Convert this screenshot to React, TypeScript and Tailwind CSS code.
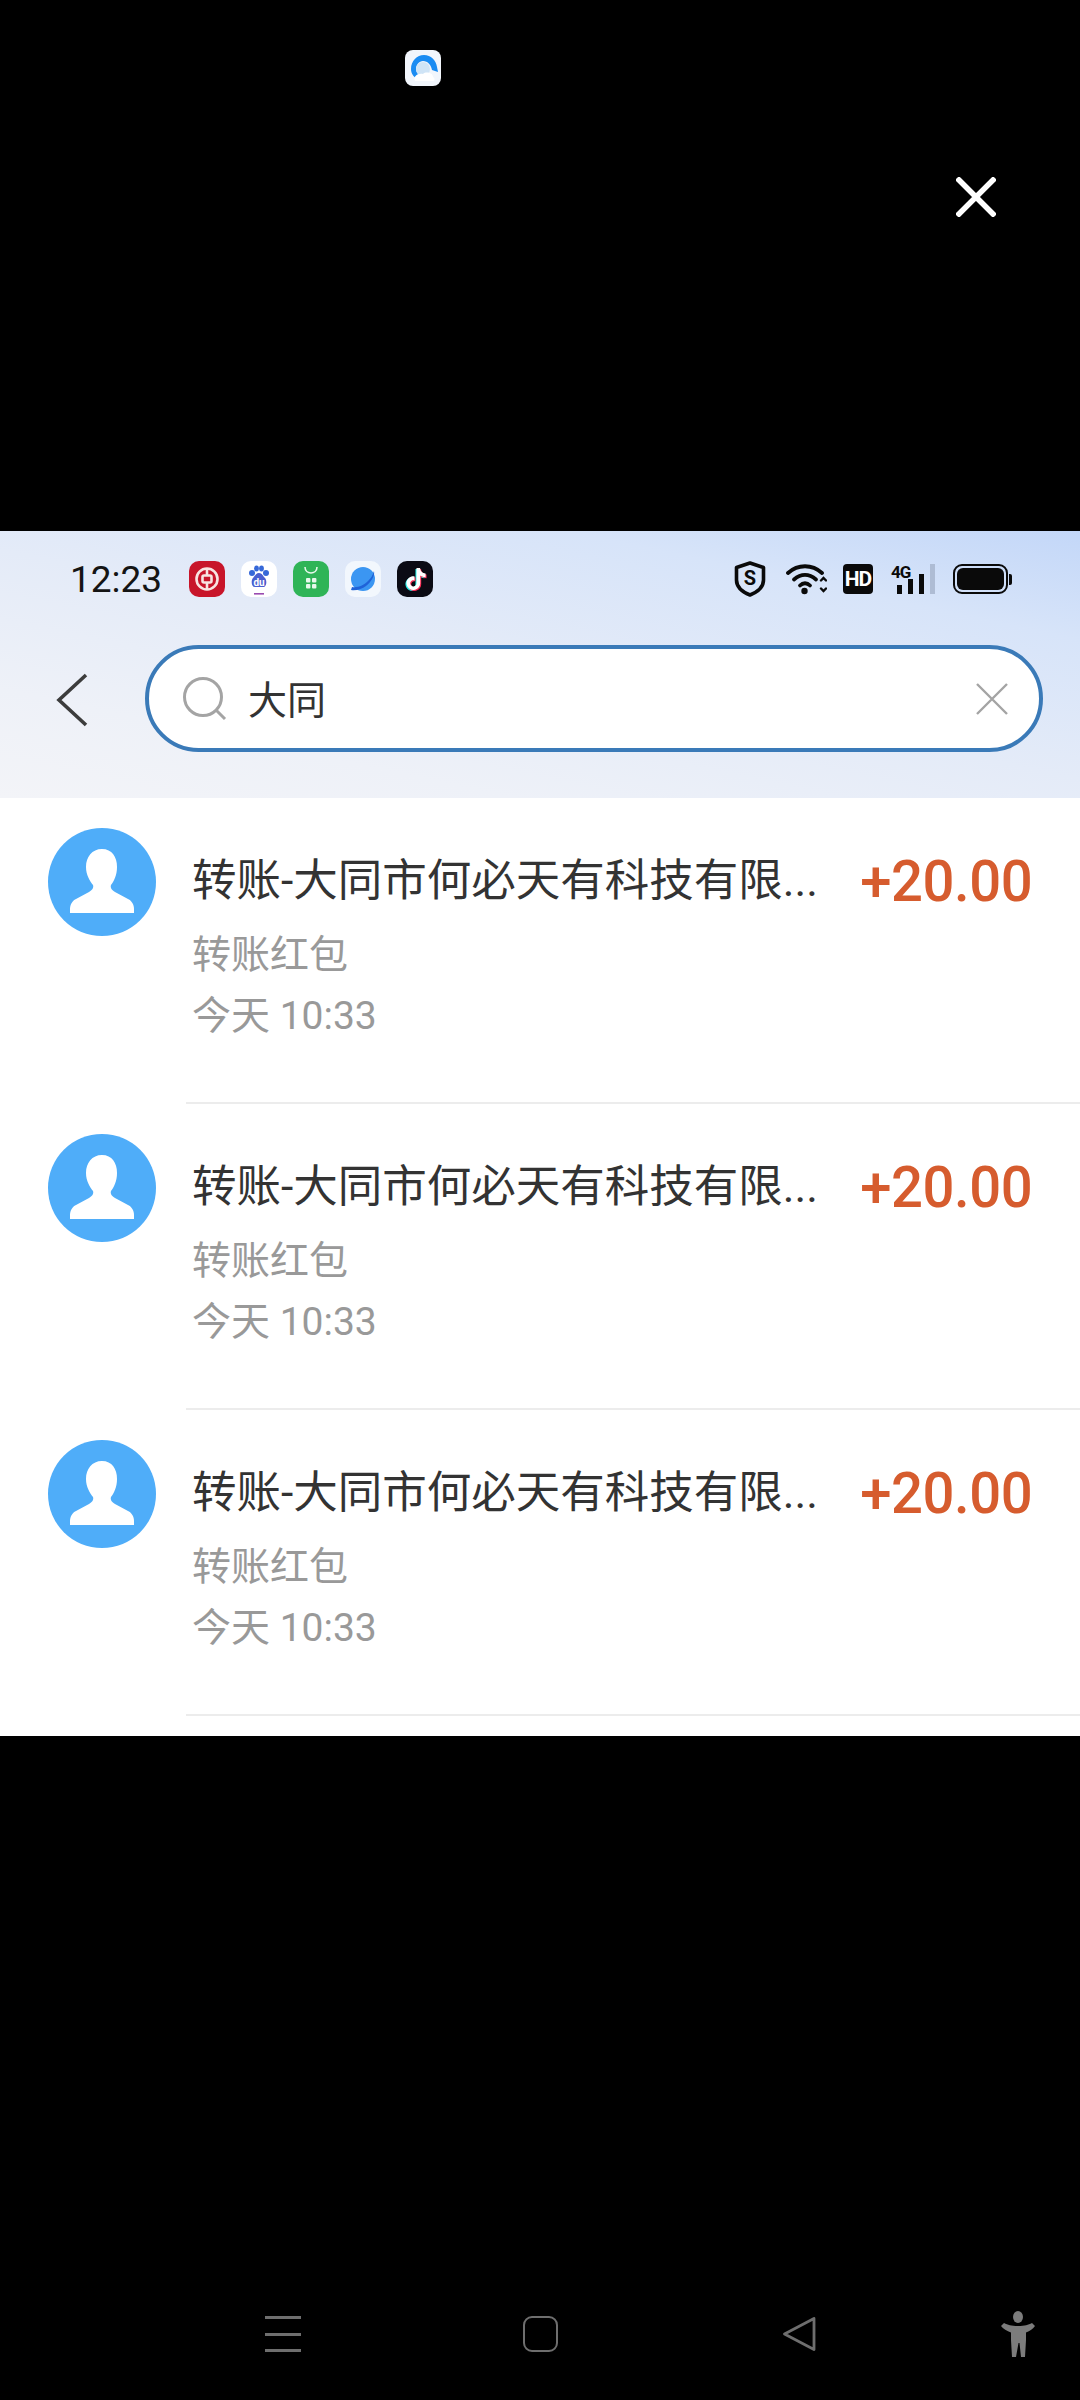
import React from "react";
import { SiTiktok } from "react-icons/si";

function AppIcons() {
  return (
    <div className="ml-[27px] flex gap-[16px]">
      <div className="flex h-[36px] w-[36px] items-center justify-center rounded-[10px] bg-[#c8152a]">
        <svg width="28" height="28" viewBox="0 0 28 28" fill="none" stroke="#f8e4e2" strokeWidth="2.6">
          <circle cx="14" cy="14" r="10.5" />
          <rect x="9.5" y="10.5" width="9" height="7" rx="1.5" />
          <path d="M14 3v7M14 18v7" />
        </svg>
      </div>
      <div className="flex h-[36px] w-[36px] items-center justify-center rounded-[10px] bg-white">
        <svg width="36" height="36" viewBox="0 0 36 36">
          <circle cx="11" cy="12" r="3" fill="#3668d8" />
          <circle cx="25" cy="12" r="3" fill="#3668d8" />
          <ellipse cx="15.5" cy="7.5" rx="2.4" ry="3" fill="#3668d8" />
          <ellipse cx="20.5" cy="7.5" rx="2.4" ry="3" fill="#3668d8" />
          <path d="M18 12c-3 0-4 3-6 5-2 2-2 9 2 9h8c4 0 4-7 2-9-2-2-3-5-6-5z" fill="#4a5fd0" />
          <text x="18" y="25" textAnchor="middle" fontSize="10" fontWeight="700" fill="#ffffff" fontFamily="Roboto, sans-serif">du</text>
          <rect x="13" y="32" width="10" height="1.6" fill="#9a4bb0" />
        </svg>
      </div>
      <div className="flex h-[36px] w-[36px] items-center justify-center rounded-[10px] bg-[#2fb457]">
        <svg width="36" height="36" viewBox="0 0 36 36" fill="#e8f8ec">
          <path d="M12 6c0 8 12 8 12 0" fill="none" stroke="#e8f8ec" strokeWidth="1.6" />
          <rect x="13" y="17" width="4.4" height="4.4" rx="1" />
          <rect x="19" y="17" width="4.4" height="4.4" rx="1" />
          <rect x="13" y="23" width="4.4" height="4.4" rx="1" />
          <rect x="19" y="23" width="4.4" height="4.4" rx="1" />
        </svg>
      </div>
      <div className="flex h-[36px] w-[36px] items-center justify-center rounded-[10px] bg-[#f2f7fd]">
        <svg width="36" height="36" viewBox="0 0 36 36">
          <circle cx="18" cy="18" r="12" fill="#3b96f2" />
          <path d="M29 10c1 5-3 11-8 15-4 3-10 5-15 4l1-3c6 1 12-2 16-6 3-3 5-6 6-10z" fill="#1f62d8" />
        </svg>
      </div>
      <div className="relative flex h-[36px] w-[36px] items-center justify-center rounded-[10px] bg-[#0b0b14]">
        <SiTiktok className="absolute left-[7px] top-[8px] h-[22px] w-[22px] text-[#25f4ee]" />
        <SiTiktok className="absolute left-[9px] top-[8px] h-[22px] w-[22px] text-[#fe2c55]" />
        <SiTiktok className="absolute left-[8px] top-[7px] h-[22px] w-[22px] text-[#ffffff]" />
      </div>
    </div>
  );
}

function StatusIcons() {
  return (
    <div className="mr-[68px] flex items-center">
      <svg width="32" height="36" viewBox="0 0 32 36" fill="none">
        <path d="M16 2 29.5 6.5V19c0 7-6 12-13.500 15C8.500 31 2.500 26 2.500 19V6.500z" stroke="#0a0a0a" strokeWidth="3.600" strokeLinejoin="round" />
        <text x="16" y="24" textAnchor="middle" fontSize="20" fontWeight="700" fill="#0a0a0a" fontFamily="Roboto, sans-serif">S</text>
      </svg>
      <svg className="ml-[20px]" width="41" height="32" viewBox="0 0 41 32" fill="none" stroke="#0a0a0a" strokeWidth="3.800" strokeLinecap="round">
        <path d="M2 10c10-9 24-9 34 0" />
        <path d="M8 16.500c7-6 15-6 22 0" />
        <path d="M14 22.500c3-3 7-3 10 0" />
        <circle cx="18.500" cy="28" r="3.200" fill="#0a0a0a" stroke="none" />
        <path d="M35 17.500l2.500-2.500 2.500 2.500M35 25.500l2.500 2.500 2.500-2.500" strokeWidth="2.400" />
      </svg>
      <div className="ml-[16px] flex h-[30px] w-[30px] items-center justify-center rounded-[4px] bg-[#0a0a0a] text-[21px] font-bold leading-none tracking-[-1px] text-white">HD</div>
      <div className="relative ml-[18px] h-[30px] w-[44px]">
        <span className="absolute left-0 top-[-2px] text-[17px] font-bold leading-[20px] tracking-[-1px] text-[#0a0a0a]">4G</span>
        <div className="absolute bottom-0 left-[6px] h-[9px] w-[5px] bg-[#0a0a0a]" />
        <div className="absolute bottom-0 left-[17px] h-[15px] w-[5px] bg-[#0a0a0a]" />
        <div className="absolute bottom-0 left-[28px] h-[20px] w-[5px] bg-[#0a0a0a]" />
        <div className="absolute bottom-0 left-[39px] h-[30px] w-[5px] bg-[#aebcd4]" />
      </div>
      <div className="ml-[18px] flex items-center">
        <div className="h-[30px] w-[55px] rounded-[9px] border-[2px] border-[#0a0a0a] p-[2px]">
          <div className="h-full w-full rounded-[6px] bg-[#0a0a0a]" />
        </div>
        <div className="ml-[1px] h-[11px] w-[3px] rounded-r-[2px] bg-[#0a0a0a]" />
      </div>
    </div>
  );
}

function Avatar() {
  return (
    <svg className="mt-[30px] shrink-0" width="108" height="108" viewBox="0 0 108 108">
      <circle cx="54" cy="54" r="54" fill="#4fadf9" />
      <path
        d="M54 21C44 21 38 29 38 39C38 47 42 53 45 57C46 60 44 62 41 64L28 71C24 73 22 77 22 81L22 85L86 85L86 81C86 77 84 73 80 71L67 64C64 62 62 60 63 57C66 53 69 47 69 39C69 29 64 21 54 21Z"
        fill="#ffffff"
      />
    </svg>
  );
}

function Row() {
  return (
    <div className="flex h-[306px] pl-[48px]">
      <Avatar />
      <div className="ml-[30px] flex-1 border-b-[2px] border-[#ececec] pl-[6px] pr-[48px]">
        <div className="flex items-start justify-between pt-[54px]">
          <div className="whitespace-nowrap text-[44.500px] leading-[58px] text-[#333333]">转账-大同市何必天有科技有限...</div>
          <div className="origin-right scale-x-[0.97] whitespace-nowrap text-[58px] font-medium leading-[58px] tracking-[-0.5px] text-[#d65c2e]">+20.00</div>
        </div>
        <div className="mt-[23px] text-[39px] leading-[44px] text-[#999999]">转账红包</div>
        <div className="mt-[17px] text-[39px] leading-[44px] text-[#999999]">今天 10:33</div>
      </div>
    </div>
  );
}

export default function App() {
  return (
    <div className="flex h-[2400px] w-[1080px] flex-col bg-black font-['Roboto','Noto_Sans_CJK_SC',sans-serif]">
      <div className="h-[531px] shrink-0 pt-[50px]">
        <div className="pl-[405px]">
          <svg width="36" height="36" viewBox="0 0 36 36">
            <rect width="36" height="36" rx="8" fill="#f2f6fc" />
            <path d="M6 19C6 11 12 5 19 5c7 0 12 5 13 12l1 5-6-2c-1-5-4-9-9-9-4 0-7 4-7 8 0 3 2 6 5 7l-2 3c-5-1-8-5-8-10z" fill="#1b8cf2" />
            <circle cx="18" cy="19" r="7" fill="#cfe4f6" />
            <path d="M10 31c-2-4 2-8 8-7 3-3 10-1 10 3 2 1 2 4 0 4z" fill="#ffffff" />
          </svg>
        </div>
        <div className="mt-[91px] flex justify-end pr-[84px]">
          <svg width="40" height="40" viewBox="0 0 40 40" stroke="#ffffff" strokeWidth="5.500" strokeLinecap="square">
            <path d="M3 3 37 37M37 3 3 37" />
          </svg>
        </div>
      </div>

      <div className="h-[267px] shrink-0 bg-[linear-gradient(192deg,#c3d7f8_0%,#d7e4f9_22%,#e4ebf8_50%,#eef1f8_78%,#f3f4f8_100%)]">
        <div className="mt-[30px] flex h-[36px] items-center justify-between">
          <div className="flex items-center pl-[70px]">
            <span className="text-[37px] leading-none text-[#141414]">12:23</span>
            <AppIcons />
          </div>
          <StatusIcons />
        </div>
        <div className="mt-[48px] flex items-center">
          <svg className="ml-[55px] mt-[3px]" width="34" height="54" viewBox="0 0 34 54" fill="none" stroke="#3c3c3c" strokeWidth="3.600">
            <path d="M31 2 4 27 31 52" />
          </svg>
          <div className="ml-[56px] flex h-[107px] w-[898px] items-center rounded-full border-[4px] border-[#3a7ab8] bg-white pl-[34px] pr-[31px]">
            <svg width="44" height="44" viewBox="0 0 44 44" fill="none" stroke="#a4a4a4" strokeWidth="3">
              <circle cx="20" cy="20" r="18.500" />
              <path d="M33 33 42 42" />
            </svg>
            <span className="ml-[21px] flex-1 pt-[5px] text-[39px] leading-none text-[#333333]">大同</span>
            <svg width="32" height="32" viewBox="0 0 32 32" fill="none" stroke="#a4a4a4" strokeWidth="2.400">
              <path d="M1 1 31 31M31 1 1 31" />
            </svg>
          </div>
        </div>
      </div>

      <div className="h-[938px] shrink-0 bg-white">
        <Row />
        <Row />
        <Row />
      </div>

      <div className="relative flex flex-1 items-start pt-[580px]">
        <div className="ml-[265px] flex h-[36px] w-[36px] flex-col justify-between">
          <div className="h-[3px] bg-[#6e6e6e]" />
          <div className="h-[3px] bg-[#6e6e6e]" />
          <div className="h-[3px] bg-[#6e6e6e]" />
        </div>
        <div className="ml-[222px] h-[36px] w-[35px] rounded-[9px] border-[2.500px] border-[#6e6e6e]" />
        <svg className="ml-[224px]" width="35" height="36" viewBox="0 0 35 36" fill="none" stroke="#6e6e6e" strokeWidth="2.800" strokeLinejoin="round">
          <path d="M32 2.500 2.500 18 32 33.500z" />
        </svg>
        <svg className="ml-[183px] mt-[-5px]" width="36" height="47" viewBox="0 0 36 47" fill="#7c7c7c">
          <ellipse cx="18" cy="6" rx="5" ry="6" />
          <path d="M1 15l3-3 c4 2 7 3 14 3s10-1 14-3l3 3c-2 3-5 5-9 6.500V29l-1 17h-4l-1.500-14h-1L16 46h-4l-1-17v-7.500C7 20 3 18 1 15z" />
        </svg>
      </div>
    </div>
  );
}
